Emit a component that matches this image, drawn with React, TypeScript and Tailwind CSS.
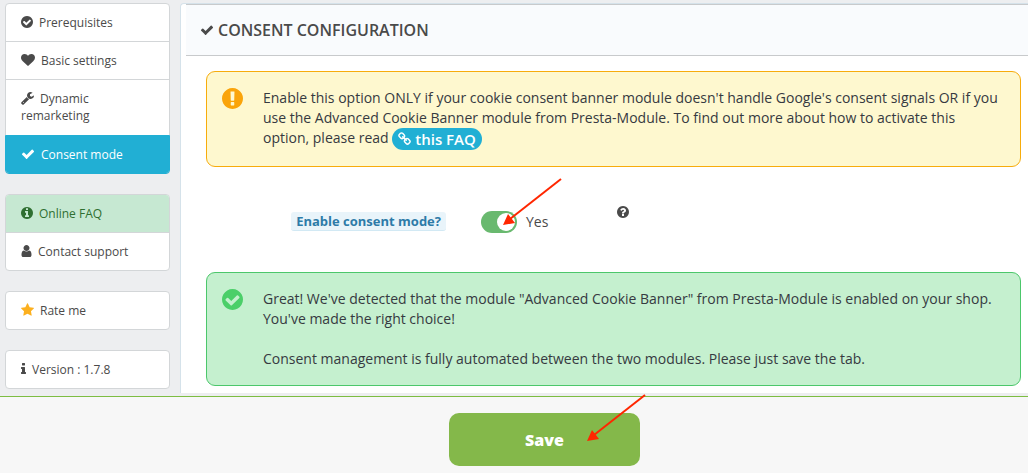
import { useState } from 'react'
import type { ReactNode } from 'react'
import clsx from 'clsx'

const DISC = 'q0 209-103 385.5t-279.5 279.5-385.5 103-385.5-103-279.5-279.5-103-385.5 103-385.5 279.5-279.5 385.5-103 385.5 103 279.5 279.5 103 385.5z'

const ICONS = {
  checkCircle: {
    box: '128 128 1536 1536',
    d: 'M1412 734q0-28-18-46l-91-90q-19-19-45-19t-45 19l-408 407-226-226q-19-19-45-19t-45 19l-91 90q-18 18-18 46 0 27 18 45l362 362q19 19 45 19 27 0 46-19l543-543q18-18 18-45zm252 162' + DISC,
  },
  heart: {
    box: '0 0 1792 1792',
    d: 'M896 1664q-26 0-44-18l-624-602q-10-8-27.5-26t-55.5-65.5-68-97.5-53.5-121-23.5-138q0-220 127-344t351-124q62 0 126.5 21.5t120 58 95.5 68.5 76 68q36-36 76-68t95.5-68.5 120-58 126.5-21.5q224 0 351 124t127 344q0 221-229 450l-623 600q-18 18-44 18z',
  },
  wrench: {
    box: '64 0 1664 1792',
    d: 'M448 1472q0-26-19-45t-45-19-45 19-19 45 19 45 45 19 45-19 19-45zm644-420l-682 682q-37 37-90 37-52 0-91-37l-106-108q-38-36-38-90 0-53 38-91l681-681q39 98 114.5 173.5t173.5 114.5zm634-435q0 39-23 106-47 134-164.5 217.5t-258.5 83.5q-185 0-316.5-131.5t-131.5-316.5 131.5-316.5 316.5-131.5q58 0 121.5 16.5t107.5 46.5q16 11 16 28t-16 28l-293 169v224l193 107q5-3 79-48.5t135.5-81 70.5-35.5q15 0 23.5 10t8.5 25z',
  },
  check: {
    box: '0 0 1792 1792',
    d: 'M1671 566q0 40-28 68l-724 724-136 136q-28 28-68 28t-68-28l-136-136-362-362q-28-28-28-68t28-68l136-136q28-28 68-28t68 28l294 295 656-657q28-28 68-28t68 28l136 136q28 28 28 68z',
  },
  infoCircle: {
    box: '128 128 1536 1536',
    d: 'M1152 1376v-160q0-14-9-23t-23-9h-96v-512q0-14-9-23t-23-9h-320q-14 0-23 9t-9 23v160q0 14 9 23t23 9h96v320h-96q-14 0-23 9t-9 23v160q0 14 9 23t23 9h448q14 0 23-9t9-23zm-128-896v-160q0-14-9-23t-23-9h-192q-14 0-23 9t-9 23v160q0 14 9 23t23 9h192q14 0 23-9t9-23zm640 416' + DISC,
  },
  user: {
    box: '192 0 1408 1792',
    d: 'M1536 1399q0 109-62.5 187t-150.5 78h-854q-88 0-150.5-78t-62.5-187q0-85 8.5-160.5t31.5-152 58.5-131 94-89 134.5-34.5q131 128 313 128t313-128q76 0 134.5 34.5t94 89 58.5 131 31.5 152 8.5 160.5zm-256-887q0 159-112.5 271.5t-271.5 112.5-271.5-112.5-112.5-271.5 112.5-271.5 271.5-112.5 271.5 112.5 112.5 271.5z',
  },
  star: {
    box: '64 0 1664 1792',
    d: 'M1728 647q0 22-26 48l-363 354 86 500q1 7 1 20 0 21-10.5 35.5t-30.5 14.5q-19 0-40-12l-449-236-449 236q-22 12-40 12-21 0-31.5-14.5t-10.5-35.5q0-6 2-20l86-500-364-354q-25-27-25-48 0-37 56-46l502-73 225-455q19-41 49-41t49 41l225 455 502 73q56 9 56 46z',
  },
  info: {
    box: '576 0 640 1792',
    d: 'M1216 1344v128q0 26-19 45t-45 19h-512q-26 0-45-19t-19-45v-128q0-26 19-45t45-19h64v-384h-64q-26 0-45-19t-19-45v-128q0-26 19-45t45-19h384q26 0 45 19t19 45v576h64q26 0 45 19t19 45zm-128-1152v192q0 26-19 45t-45 19h-256q-26 0-45-19t-19-45v-192q0-26 19-45t45-19h256q26 0 45 19t19 45z',
  },
  exclamation: {
    box: '128 128 1536 1536',
    d: 'M896 128q209 0 385.5 103t279.5 279.5 103 385.5-103 385.5-279.5 279.5-385.5 103-385.5-103-279.5-279.5-103-385.5 103-385.5 279.5-279.5 385.5-103zm128 1247v-190q0-14-9-23.5t-22-9.5h-192q-13 0-23 10t-10 23v190q0 13 10 23t23 10h192q13 0 22-9.5t9-23.5zm-2-344l18-621q0-12-10-18-10-8-24-8h-220q-14 0-24 8-10 6-10 18l17 621q0 10 10 17.5t24 7.5h185q14 0 23.5-7.5t10.5-17.5z',
  },
  question: {
    box: '128 128 1536 1536',
    d: 'M1024 1376v-192q0-14-9-23t-23-9h-192q-14 0-23 9t-9 23v192q0 14 9 23t23 9h192q14 0 23-9t9-23zm256-672q0-88-55.5-163t-138.5-116-170-41q-243 0-371 213-15 24 8 42l132 100q7 6 19 6 16 0 25-12 53-68 86-92 34-24 86-24 48 0 85.5 26t37.5 59q0 38-20 61t-68 45q-63 28-115.5 86.5t-52.5 125.5v36q0 14 9 23t23 9h192q14 0 23-9t9-23q0-19 21.5-49.5t54.5-49.5q32-18 49-28.5t46-35 44.5-48 28-60.5 12.5-81zm384 192' + DISC,
  },
  chain: {
    box: '64 0 1664 1792',
    d: 'M1520 1216q0-40-28-68l-208-208q-28-28-68-28-42 0-72 32 3 3 19 18.5t21.5 21.5 15 19 13 25.5 3.5 27.5q0 40-28 68t-68 28q-15 0-27.5-3.5t-25.5-13-19-15-21.5-21.5-18.5-19q-33 31-33 73 0 40 28 68l206 207q27 27 68 27 40 0 68-26l147-146q28-28 28-67zm-703-705q0-40-28-68l-206-207q-28-28-68-28-39 0-68 27l-147 146q-28 28-28 67 0 40 28 68l208 208q27 27 68 27 42 0 72-31-3-3-19-18.5t-21.5-21.5-15-19-13-25.5-3.5-27.5q0-40 28-68t68-28q15 0 27.5 3.5t25.5 13 19 15 21.5 21.5 18.5 19q33-31 33-73zm895 705q0 120-85 203l-147 146q-83 83-203 83-121 0-204-85l-206-207q-83-83-83-203 0-123 88-209l-88-88q-86 88-208 88-120 0-204-84l-208-208q-84-84-84-204t85-203l147-146q83-83 203-83 121 0 204 85l206 207q83 83 83 203 0 123-88 209l88 88q86-88 208-88 120 0 204 84l208 208q84 84 84 204z',
  },
}

type IconName = keyof typeof ICONS

function Icon({ name, className }: { name: IconName; className?: string }) {
  return (
    <svg viewBox={ICONS[name].box} fill="currentColor" aria-hidden="true" className={className}>
      <path d={ICONS[name].d} />
    </svg>
  )
}

type NavItem = { label: string; icon: IconName; className?: string; iconClass: string }

const NAV: NavItem[][] = [
  [
    { label: 'Prerequisites', icon: 'checkCircle', iconClass: 'size-3 align-[-1px]' },
    { label: 'Basic settings', icon: 'heart', iconClass: 'h-[14px] align-[-2px]' },
    { label: 'Dynamic remarketing', icon: 'wrench', iconClass: 'h-[14px] align-[-2px]', className: 'pb-[11px]' },
    { label: 'Consent mode', icon: 'check', iconClass: 'h-[14px] align-[-2px]', className: 'bg-[#21afd4] text-white outline outline-[#21afd4]' },
  ],
  [
    { label: 'Online FAQ', icon: 'infoCircle', iconClass: 'size-3 align-[-1px]', className: 'bg-[#c6e8d2] text-[#2f6f31]' },
    { label: 'Contact support', icon: 'user', iconClass: 'h-[14px] align-[-2px]' },
  ],
  [{ label: 'Rate me', icon: 'star', iconClass: 'h-[14px] align-[-2px] text-[#fcb01f]' }],
  [{ label: 'Version : 1.7.8', icon: 'info', iconClass: 'h-[14px] align-[-2px]' }],
]

function Sidebar() {
  return (
    <nav className="flex w-[165px] shrink-0 flex-col gap-5 text-xs leading-[17px]">
      {NAV.map((group) => (
        <ul key={group[0].label} className="divide-y divide-[#d3d6d8] rounded border border-[#d3d6d8] bg-white">
          {group.map((item) => (
            <li key={item.label} className="first:*:rounded-t-[3px] last:*:rounded-b-[3px]">
              <a href="#" className={clsx('block px-[15px] py-[10px]', item.className)}>
                <Icon name={item.icon} className={clsx('mr-[6px] inline-block', item.iconClass)} />
                {item.label}
              </a>
            </li>
          ))}
        </ul>
      ))}
    </nav>
  )
}

function Alert({ icon, className, iconClass, children }: { icon: IconName; className: string; iconClass: string; children: ReactNode }) {
  return (
    <div className={clsx('flex gap-5 rounded-[9px] border pl-[15px] pr-5 py-4 text-sm leading-5 text-[#363a41]', className)}>
      <Icon name={icon} className={clsx('size-[21px] shrink-0', iconClass)} />
      <div className="min-w-0 flex-1">{children}</div>
    </div>
  )
}

// Red callout arrow, the tip is at the bottom left corner
function Arrow({ className }: { className: string }) {
  return (
    <svg viewBox="0 0 60 48" className={clsx('pointer-events-none absolute h-12 w-[60px]', className)} aria-hidden="true">
      <path d="M58 1L7 41" stroke="#ff2600" strokeWidth="2" fill="none" />
      <path d="M0 47L5 36L12 45Z" fill="#ff2600" />
    </svg>
  )
}

export default function App() {
  const [enabled, setEnabled] = useState(true)

  return (
    <div className="flex min-h-screen flex-col bg-[#edeef0] font-['Open_Sans','Noto_Sans',sans-serif] text-[#4a4a4a]">
      <div className="flex flex-1 gap-[10px] pb-[3px] pl-[5px] pt-[3px]">
        <Sidebar />

        <main className="min-w-0 flex-1 rounded-tl border-l border-t border-l-[#d5e2ea] border-t-[#d5e2ea] bg-white">
          <div className="ml-[5px] border-b border-t border-b-[#c8cacc] border-t-[#c8cacc] bg-[#f9fbfd]">
            <h1 className="flex items-center gap-1 px-[14px] py-[14px] text-base font-semibold leading-[22px]">
              <Icon name="check" className="size-[14px]" />
              CONSENT CONFIGURATION
            </h1>
          </div>

          <div className="pl-[25px] pr-[7px] pt-[15px] pb-[7px]">
            <Alert icon="exclamation" className="border-[#f7ac0c] bg-[#fef8cf]" iconClass="text-[#faa40a]">
              Enable this option ONLY if your cookie consent banner module doesn't handle Google's consent signals OR if you
              use the Advanced Cookie Banner module from Presta-Module. To find out more about how to activate this
              option, please read{' '}
              <a href="#" className="inline-flex h-[22px] items-center gap-1 rounded-full bg-[#21afd4] px-[6px] align-middle text-[15px] font-semibold text-white">
                <Icon name="chain" className="h-[14px]" />
                this FAQ
              </a>
            </Alert>

            <div className="flex items-start py-[39px]">
              <div className="flex w-[240px] justify-end pt-[6px]">
                <label htmlFor="consent" className="rounded-[3px] border-b border-[#d2e9f4] bg-[#e9f4fa] px-[5px] text-[13px] font-bold leading-[18px] text-[#2d7ba8]">
                  Enable consent mode?
                </label>
              </div>
              <div className="relative ml-[35px] flex w-[136px] items-center gap-[9px] pt-[5px]">
                <input
                  id="consent"
                  type="checkbox"
                  role="switch"
                  checked={enabled}
                  onChange={() => setEnabled(!enabled)}
                  className="h-[22px] w-9 cursor-pointer appearance-none rounded-full bg-gray-300 p-[2px] before:block before:size-[18px] before:rounded-full before:bg-white checked:bg-[#69b96f] checked:before:ml-[14px]"
                />
                <span className="text-sm leading-5">{enabled ? 'Yes' : 'No'}</span>
                <Arrow className="-top-[28px] left-[22px]" />
              </div>
              <button type="button" aria-label="Help" className="flex">
                <Icon name="question" className="size-3" />
              </button>
            </div>

            <Alert icon="checkCircle" className="border-[#4cc76b] bg-[#c5f0cf]" iconClass="text-[#4bcf69]">
              <p>Great! We've detected that the module "Advanced Cookie Banner" from Presta-Module is enabled on your shop.</p>
              <p>You've made the right choice!</p>
              <p className="mt-5">Consent management is fully automated between the two modules. Please just save the tab.</p>
            </Alert>
          </div>
        </main>
      </div>

      <footer className="flex justify-center border-t border-[#7dbd42] bg-[#f7f7f7] pb-[7px] pl-[61px] pt-4">
        <div className="relative">
          <button type="button" className="block h-[53px] w-[191px] rounded-[10px] bg-[#84b84a] text-base font-extrabold text-white">
            Save
          </button>
          <Arrow className="-top-[19px] left-[138px]" />
        </div>
      </footer>
    </div>
  )
}
